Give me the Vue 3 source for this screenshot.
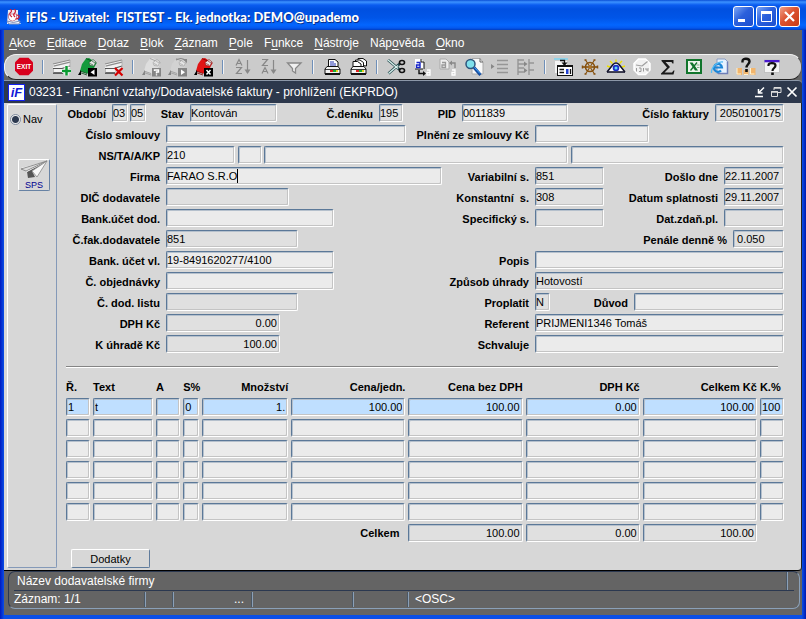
<script setup>
const menu = [
  ['', 'A', 'kce'], ['', 'E', 'ditace'], ['', 'D', 'otaz'], ['', 'B', 'lok'], ['', 'Z', 'áznam'],
  ['', 'P', 'ole'], ['F', 'u', 'nkce'], ['', 'N', 'ástroje'], ['Náp', 'o', 'věda'], ['', 'O', 'kno']
]

const card = (fill, dark, box, mark) => `
  <path d="M8 1.500 L11 1 L18.500 6 L15 13 L11 17 L2 14 L4 7Z" fill="${fill}"/>
  <path d="M8 1.500 L18.500 6 M2 14 L9 16.500 M2 15.500 L9 18" fill="none" stroke="${dark}" stroke-width=".8"/>
  <path d="M11 5.500 L15 2.500 L18 5 L16 9 L12 8.500Z" fill="#e4e4e4" stroke="${dark}" stroke-width=".6"/>
  <path d="M12 6.500 L15 8 M14 4 L17 6" stroke="${dark}" stroke-width=".6"/>
  <path d="M0 18 l3-5 v5z" fill="${box}"/>
  <rect x="10" y="11" width="9" height="8.500" fill="${box}"/>${mark}`

const sheet = `
  <path d="M1 7 L18 3 V11 L11 13 V16 H1Z" fill="#f2f2f2"/>
  <path d="M1 7 L18 3 M1.500 9.200 L18 5.200" stroke="#8c8c8c" stroke-width="1.200" fill="none"/>
  <path d="M1 11.500 H10 L18 9" stroke="#555" stroke-width="1.200" fill="none"/>
  <path d="M1 16 H11" stroke="#333" stroke-width="1.400"/>
  <path d="M1.500 12 V15.500 M18 3 V10" stroke="#aaa" stroke-width=".8"/>`

const letters = (a, b) => `
  <g fill="none" stroke="#888" stroke-width="1.200">${a}${b}
  <path d="M15.500 3 V16"/></g><path d="M12.500 12.500 h6 l-3 4.500z" fill="#888"/>`
const glyphA = y => `<path d="M4 ${y + 6} L7 ${y} L10 ${y + 6} M5 ${y + 4} H9"/>`
const glyphZ = y => `<path d="M4 ${y} H9.500 L4.500 ${y + 6} H10"/>`

const printer = `
  <path d="M3 12 L5 9.500 H16 L18 12 V17 H3Z" fill="#f2f2f2" stroke="#111"/>
  <path d="M3 12.500 H18" stroke="#111" stroke-width=".8"/>
  <rect x="3" y="16" width="15" height="2" fill="#111"/>
  <rect x="8" y="13" width="3" height="2" fill="#e02020"/><rect x="11" y="13" width="3" height="2" fill="#18b030"/><rect x="14" y="13" width="2" height="2" fill="#e8d020"/>`

const icons = {
  exit: `<path d="M5.500 .8 H14.500 L19 5.300 V13.700 L14.500 18.200 H5.500 L1 13.700 V5.300Z" fill="#d8001c"/><text x="10" y="12" text-anchor="middle" font-size="6.500" font-weight="bold" fill="#fff" font-family="Liberation Sans, sans-serif">EXIT</text>`,
  add: sheet + `<path d="M14.500 9 V18.500 M10 14 H19" stroke="#fff" stroke-width="4"/><path d="M14.500 9 V18.500 M10 14 H19" stroke="#0a9a30" stroke-width="2.500"/>`,
  load: card('#149a3c', '#064a18', '#000', '<path d="M16.500 12.500 v5.500 l-4-2.800z" fill="#fff"/>'),
  remove: sheet + `<path d="M11 11 L18.500 18.500 M18.500 11 L11 18.500" stroke="#d40000" stroke-width="2.200"/>`,
  query: card('#dedede', '#989898', '#858585', '<path d="M12.500 14 v-1 h4 v2 h-2 v1.500 M14.500 17.200 v1.300" fill="none" stroke="#fff" stroke-width="1.400"/>'),
  run: card('#d2d2d2', '#989898', '#858585', '<path d="M13 12.500 v5.500 l4-2.800z" fill="#fff"/>') + '<path d="M8 3 q5-3 9 0" fill="none" stroke="#888" stroke-width="1.200"/><path d="M14.500 2 h4.500 v4z" fill="#888"/>',
  cancel: card('#e01414', '#7c0000', '#000', '<path d="M12.500 13 l4 4.500 M16.500 13 l-4 4.500" stroke="#fff" stroke-width="1.500"/>'),
  az: letters(glyphA(2.5), glyphZ(10.5)),
  za: letters(glyphZ(2.5), glyphA(10.5)),
  filter: `<path d="M3.500 6 H17 L11.500 11.500 V16 L8.500 14 V11.500Z" fill="#f0f0f0" stroke="#888" stroke-width="1.300"/>`,
  print: `<path d="M6.500 10 V2.500 H13 L16 5 V10Z" fill="#fff" stroke="#111"/><path d="M8 5 h4 M8 7 h6 M8 9 h6" stroke="#2435b5"/>` + printer,
  printAll: `<path d="M10 8 V1.500 H15 L18.500 4 V9Z" fill="#fff" stroke="#111"/><path d="M7.500 9 V3 H12 L15.500 5.500 V10Z" fill="#fff" stroke="#111"/><path d="M5 10 V4.500 H9.500 L13 7 V10Z" fill="#fff" stroke="#111"/>` + printer,
  cut: `<path d="M2 3 L14 13 M2.500 16.500 L14 6.500" stroke="#284c50" stroke-width="2.800"/><path d="M2 3 L12 11.500 M2.500 16.500 L12 8.500" stroke="#d7f2ee" stroke-width="1.200"/><ellipse cx="16" cy="5.500" rx="2.500" ry="2" fill="none" stroke="#111" stroke-width="1.600"/><ellipse cx="16" cy="13.500" rx="2.500" ry="2" fill="none" stroke="#111" stroke-width="1.600"/>`,
  copy: `<path d="M3 2 H9 L12 5 V12 H3Z" fill="#fff"/><path d="M9 2 V5 H12 V12 M3 12 H11" fill="none" stroke="#111"/><path d="M4.500 5.500 H8 V10.500 H4.500 V8 H8" fill="none" stroke="#1724c8" stroke-width="1.400"/><path d="M7 13 V16.500 H12" fill="none" stroke="#111" stroke-width="1.400"/><path d="M11 14 l3 2.500 l-3 2.500z" fill="#111"/><path d="M15 13 H18 V18 H15 V15.500 H18" fill="none" stroke="#fff" stroke-width="1.300"/>`,
  paste: `<path d="M2 2 H8 L11 5 V12 H2Z" fill="#eee" stroke="#aaa"/><path d="M4 5.500 H7.500 V10.500 H4 V8 H7.500" fill="none" stroke="#999" stroke-width="1.300"/><path d="M12 6 H17 V11" fill="none" stroke="#888" stroke-width="1.400"/><path d="M14 3.500 l-3 2.500 l3 2.500z" fill="#888"/><path d="M14 13 H17 V18 H14 V15.500 H17" fill="none" stroke="#fff" stroke-width="1.300"/>`,
  find: `<path d="M8 1.500 H16 L19 5 V17 H8Z" fill="#f8f8f8" stroke="#aaa"/><path d="M16 1.500 V5 H19" fill="none" stroke="#666"/><circle cx="6.500" cy="7" r="4.500" fill="#7fe0ec" stroke="#2d557c" stroke-width="1.500"/><path d="M10 10.500 L16.500 18" stroke="#164c9e" stroke-width="3"/><path d="M10.500 10.500 L16 16.500" stroke="#3fa6ff" stroke-width="1"/>`,
  indent: `<path d="M7 3.500 H18 M7 7.500 H18 M7 11.500 H18 M7 15.500 H18" stroke="#969696" stroke-width="1.600"/><path d="M1 7 v5 l3.500-2.500z" fill="#888"/>`,
  tree: `<path d="M2 2 V18 M2 3 H8 M2 7 H8 M2 11 H8 M2 15 H8 M13 2 V18 M13 6 H18 M13 13 H18" fill="none" stroke="#969696" stroke-width="1.400"/><path d="M8 4.500 v5 l3.500-2.500z M8 11 v5 l3.500-2.500z" fill="#888"/>`,
  list: `<path d="M0 2 H14" stroke="#7ad4f2" stroke-width="1.500"/><path d="M1 4 H13 V16 H1Z" fill="#f4f4f4"/><rect x="3.500" y="8.500" width="15" height="10" fill="#fff" stroke="#111"/><path d="M3 9 H19" stroke="#111" stroke-width="2"/><path d="M5.500 12.500 h4.500 M5.500 15.500 h4.500 M16.500 12 v5" stroke="#111" stroke-width="1.300"/><rect x="12" y="12" width="2.500" height="5" fill="#2040d0"/><path d="M6 3.500 H10.500 V6" fill="none" stroke="#111" stroke-width="1.300"/><path d="M7.500 5.500 h6 l-3 3.500z" fill="#111"/>`,
  helm: `<g stroke="#86500c" fill="none"><circle cx="10" cy="10" r="4.500" stroke-width="1.600"/><path d="M2 10 H18" stroke-width="1.600"/><path d="M5.500 3 L14.500 17 M14.500 3 L5.500 17" stroke-width="1.100"/><path d="M2.500 8.500 V11.500 M17.500 8.500 V11.500 M4.500 3 H6.500 M13.500 3 H15.500 M4.500 17 H6.500 M13.500 17 H15.500" stroke-width="1.500"/></g><circle cx="10" cy="10" r="1.600" fill="#b0731e"/>`,
  eye: `<path d="M10 2.500 V5 M4 4 L6.500 6.500 M16 4 L13.500 6.500 M1 9 L4 10 M19 9 L16 10" stroke="#ede000" stroke-width="1.400"/><path d="M10 5.500 L18 15 H2Z" fill="#fff"/><path d="M1 15 L7 7.500 Q10 4.500 13 7.500 L19 15" fill="none" stroke="#14142c" stroke-width="1.500"/><path d="M1 15 H19" stroke="#14142c" stroke-width="1.600"/><circle cx="10" cy="11" r="3.300" fill="#1c30c8"/><circle cx="10" cy="11" r="1.500" fill="#62d7f6"/>`,
  clock: `<path d="M6.500 2 H13.500 L18 6.500 V13 L13.500 17.500 H6.500 L2 13 V6.500Z" fill="#f2f2f2" stroke="#fff" stroke-width="1.500"/><path d="M10 9 L15.500 4.500 M4 8 L10 9" stroke="#a0a0a0" stroke-width="1.200"/><path d="M4.500 11 v3.500 M7 11 h2 v3.500 h-2 M11.500 11 v3.500 M14 11 v2 h2 M16 11 v3.500" fill="none" stroke="#999"/>`,
  sum: `<path d="M3.500 3 H15.500 V6.500 H14.500 L13.500 5 H7.500 L12 10 L6.500 15.500 H14 L15.500 13.500 H16.500 L15.500 17.500 H3 V16.500 L9 10.500 L3.500 4Z" fill="#1a1a1a"/>`,
  excel: `<rect x="3" y="3" width="14" height="13" fill="#eef5ec" stroke="#11752c" stroke-width="2"/><path d="M5.500 5.500 H8.500 L14 13.500 H11Z" fill="#11752c"/><path d="M13 5.500 L6.500 13.500" stroke="#11752c" stroke-width="1.300"/><path d="M12.500 8 h3 M13 10.500 h2.500" stroke="#6a9d72" stroke-width=".8"/>`,
  web: `<path d="M7 2 H15 L17.500 4.500 V16.500 H7Z" fill="#e6f2ff" stroke="#8a9dc2"/><path d="M17.500 4.500 V16.500 H8" fill="none" stroke="#6f7fb8" stroke-width="1.500"/><path d="M4 10.500 H12 A4 4 0 1 0 11 13.500" fill="none" stroke="#1b86d8" stroke-width="2.200"/><path d="M1.500 16 C1 10 8 4 13 5" fill="none" stroke="#55bcf5" stroke-width="1.300"/>`,
  who: `<path d="M1 11 h5 v7 h-5z M7.500 13 h5 v5 h-5z M14.500 11 h5 v7 h-5z" fill="#f2b56c"/><path d="M1 11 v6 h4 M14.500 11 v6 h4 M8 17.500 h4" fill="none" stroke="#fff2d0"/><path d="M6.500 5.500 V4 C6.500 1 13.500 1 13.500 4.500 C13.500 7 10.500 7.500 10.500 10.500" fill="none" stroke="#111" stroke-width="2.400"/><rect x="9.200" y="12" width="2.600" height="3" fill="#111"/>`,
  help: `<rect x="2.500" y="3" width="15" height="12.500" fill="#f4f4f4" stroke="#bbb" stroke-width=".8"/><rect x="2.500" y="3" width="15" height="2.300" fill="#4818cc"/><path d="M6.500 9 V8 C6.500 5.500 13.500 5.500 13.500 8.500 C13.500 11 10.500 11 10.500 14" fill="none" stroke="#111" stroke-width="2.200"/><rect x="9.200" y="15.500" width="2.600" height="2.500" fill="#111"/>`
}

const tools = [
  [['exit', 'Konec']],
  [['add', 'Vložit'], ['load', 'Načíst'], ['remove', 'Smazat']],
  [['query', 'Zadat dotaz'], ['run', 'Spustit dotaz'], ['cancel', 'Zrušit dotaz']],
  [['az', 'Vzestupně'], ['za', 'Sestupně'], ['filter', 'Filtr']],
  [['print', 'Tisk'], ['printAll', 'Tisk všeho']],
  [['cut', 'Vyjmout'], ['copy', 'Kopírovat'], ['paste', 'Vložit hodnotu'], ['find', 'Hledat'], ['indent', 'Odsadit'], ['tree', 'Strom']],
  [['list', 'Seznam'], ['helm', 'Navigace'], ['eye', 'Náhled'], ['clock', 'Kalendář'], ['sum', 'Součet'], ['excel', 'Excel'], ['web', 'Web'], ['who', 'Kontakty'], ['help', 'Nápověda']]
]

// Cell builders: proportional widths of one form row add up to 720.
const L = (label, w) => ({ label, w })
const F = (name, value, w, opt = {}) => ({ name, value, w, ...opt })
const G = w => ({ w })
const dim = { dim: true }
const num = { dim: true, right: true }

const rows = [
  [L('Období', 48), F('Období', '03', 16, dim), G(2), F('Období rok', '05', 16, dim), L('Stav', 44), F('Stav', 'Kontován', 87, dim), L('Č.deníku', 102), F('Č.deníku', '195', 24, dim), L('PID', 59), F('PID', '0011839', 106), L('Číslo faktury', 147), F('Číslo faktury', '2050100175', 69, num)],
  [L('Číslo smlouvy', 102), F('Číslo smlouvy', '', 240), L('Plnění ze smlouvy Kč', 129), F('Plnění ze smlouvy Kč', '', 114), G(135)],
  [L('NS/TA/A/KP', 102), F('NS/TA/A/KP', '210', 69), G(3), F('TA', '', 24), G(2), F('A', '', 304), G(3), F('KP', '', 213)],
  [L('Firma', 102), F('Firma', 'FARAO S.R.O', 276, { caret: true }), L('Variabilní s.', 93), F('Variabilní s.', '851', 69, dim), L('Došlo dne', 120), F('Došlo dne', '22.11.2007', 60, dim)],
  [L('DIČ dodavatele', 102), F('DIČ dodavatele', '', 123, dim), L('Konstantní  s.', 246), F('Konstantní  s.', '308', 69, dim), L('Datum splatnosti', 120), F('Datum splatnosti', '29.11.2007', 60, dim)],
  [L('Bank.účet dod.', 102), F('Bank.účet dod.', '', 168), L('Specifický s.', 201), F('Specifický s.', '', 69, dim), L('Dat.zdaň.pl.', 120), F('Dat.zdaň.pl.', '', 60, dim)],
  [L('Č.fak.dodavatele', 102), F('Č.fak.dodavatele', '851', 132, dim), L('Penále denně %', 435), F('Penále denně %', ' 0.050', 51, dim)],
  [L('Bank. účet vl.', 102), F('Bank. účet vl.', '19-8491620277/4100', 168), L('Popis', 201), F('Popis', '', 249)],
  [L('Č. objednávky', 102), F('Č. objednávky', '', 168), L('Způsob úhrady', 201), F('Způsob úhrady', 'Hotovostí', 249, dim)],
  [L('Č. dod. listu', 102), F('Č. dod. listu', '', 132, dim), L('Proplatit', 237), F('Proplatit', 'N', 15, dim), L('Důvod', 84), F('Důvod', '', 150)],
  [L('DPH Kč', 102), F('DPH Kč', '0.00', 114, num), L('Referent', 255), F('Referent', 'PRIJMENI1346 Tomáš', 249)],
  [L('K úhradě Kč', 102), F('K úhradě Kč', '100.00', 114, num), L('Schvaluje', 255), F('Schvaluje', '', 249)]
]
const fieldId = name => 'f-' + name.replace(/[^\p{L}\p{N}]+/gu, '-')

const columns = [
  { title: 'Ř.', w: 24 }, { title: 'Text', w: 60 }, { title: 'A', w: 24 }, { title: 'S%', w: 16 },
  { title: 'Množství', w: 86, right: true }, { title: 'Cena/jedn.', w: 114, right: true },
  { title: 'Cena bez DPH', w: 114, right: true }, { title: 'DPH Kč', w: 114, right: true },
  { title: 'Celkem Kč', w: 114, right: true }, { title: 'K.%', w: 24 }
]
const columnTotal = columns.reduce((s, c) => s + c.w, 0)
const lines = [
  ['1', 't', '', '0', '1.', '100.00', '100.00', '0.00', '100.00', '100'],
  ...Array.from({ length: 5 }, () => Array(10).fill(''))
]
const totals = [['Celkem bez DPH', '100.00'], ['Celkem DPH', '0.00'], ['Celkem Kč', '100.00']]
</script>

<template>
  <div class="window">
    <header class="titlebar">
      <svg class="java" viewBox="0 0 16 16" aria-hidden="true">
        <path d="M2 1 H12 V11 L15 15 H1Z" fill="#e9eef8" />
        <path d="M2.500 5 h8 v4 q-1 3 -4 3 q-3 0 -4-3z" fill="#fff" stroke="#c98a9a" />
        <path d="M4 0 q3 2 0 4 q-1 2 2 4 M8 0 q3 2 0 5 q-1 1 1 3 M10.500 6 q4 0 2 3 q-1 1 -3 1" fill="none" stroke="#cf2036" stroke-width="1.200" />
        <path d="M1 12 q6 3 13 0 l-1 3 h-10z" fill="#f5f8ff" stroke="#8190bb" />
      </svg>
      <h1>iFIS - Uživatel:&nbsp; FISTEST - Ek. jednotka: DEMO@upademo</h1>
      <button class="xp" type="button" aria-label="Minimalizovat"><svg viewBox="0 0 19 19"><path d="M4 13.500 H11" stroke="#fff" stroke-width="3" /></svg></button>
      <button class="xp" type="button" aria-label="Maximalizovat"><svg viewBox="0 0 19 19"><path d="M4.500 5 V14.500 H14.500 V5" fill="none" stroke="#fff" /><path d="M4 5.500 H15" stroke="#fff" stroke-width="3" /></svg></button>
      <button class="xp close" type="button" aria-label="Zavřít"><svg viewBox="0 0 19 19"><path d="M5 5 L14 14 M14 5 L5 14" stroke="#fff" stroke-width="2.200" /></svg></button>
    </header>

    <div class="frame">
      <nav class="menu">
        <a v-for="m in menu" :key="m.join('')" href="#">{{ m[0] }}<u>{{ m[1] }}</u>{{ m[2] }}</a>
      </nav>

      <div class="toolbar" role="toolbar">
        <div v-for="(group, i) in tools" :key="i" class="group">
          <button v-for="t in group" :key="t[0]" type="button" class="tool" :aria-label="t[1]">
            <svg viewBox="0 0 20 20" v-html="icons[t[0]]"></svg>
          </button>
        </div>
      </div>

      <div class="subtitle">
        <span class="logo">iF</span>
        <h2>03231 - Finanční vztahy/Dodavatelské faktury - prohlížení (EKPRDO)</h2>
        <button type="button" aria-label="Sbalit"><svg viewBox="0 0 12 12"><path d="M1 10.500 H9 M10 1.500 L5 6.500 M4.500 3 V7 H8.500" fill="none" stroke="#fff" stroke-width="1.500" /></svg></button>
        <button type="button" aria-label="Obnovit"><svg viewBox="0 0 12 12"><path d="M4 4 V1.500 H11 V6.500 H8" fill="none" stroke="#ddd" /><path d="M4 2 H11 M1 6 H8" stroke="#ddd" stroke-width="1.500" /><path d="M1.500 5.500 H7.500 V10.500 H1.500Z" fill="none" stroke="#ddd" /></svg></button>
        <button type="button" aria-label="Zavřít formulář"><svg viewBox="0 0 12 12"><path d="M1.500 1.500 L10.500 10.500 M10.500 1.500 L1.500 10.500" stroke="#fff" stroke-width="1.700" /></svg></button>
      </div>

      <div class="body">
        <aside class="side">
          <label class="nav"><input type="radio" name="nav" checked>Nav</label>
          <button type="button" class="sps">
            <svg viewBox="0 0 28 20" aria-hidden="true">
              <path d="M1 8 L27 1 L18 14 L13 12 L9 18 L6 10Z" fill="#fff" />
              <path d="M1 9 L27 1 L6 11Z" fill="#ddd" stroke="#777" stroke-width=".8" />
              <path d="M7 12 L26 2 L12 11 L15 17 L8 18Z" fill="#555" />
              <path d="M12 11 L27 1 L17 17Z" fill="#f8f8f8" stroke="#888" stroke-width=".8" />
            </svg>
            <span>SPS</span>
          </button>
        </aside>

        <main class="content">
          <form class="form" @submit.prevent>
            <div v-for="(row, r) in rows" :key="r" class="row">
              <div v-for="(c, i) in row" :key="i" class="cell" :style="{ flexGrow: c.w }">
                <label v-if="c.label" :for="fieldId(c.label)">{{ c.label }}</label>
                <input
                  v-else-if="c.name" :id="fieldId(c.name)" type="text" class="field"
                  :class="{ dim: c.dim, right: c.right }" :aria-label="c.name" :value="c.value"
                >
                <span v-if="c.caret" class="caret" aria-hidden="true">{{ c.value }}</span>
              </div>
            </div>
          </form>

          <hr>

          <table class="lines">
            <colgroup>
              <col v-for="c in columns" :key="c.title" :style="{ width: (c.w / columnTotal * 100) + '%' }">
            </colgroup>
            <thead>
              <tr><th v-for="c in columns" :key="c.title" scope="col" :class="{ right: c.right }">{{ c.title }}</th></tr>
            </thead>
            <tbody>
              <tr v-for="(line, r) in lines" :key="r" :class="{ current: r === 0 }">
                <td v-for="(v, i) in line" :key="i">
                  <input type="text" class="field" :class="{ right: columns[i].right }" :value="v" :aria-label="columns[i].title + ' ' + (r + 1)">
                </td>
              </tr>
            </tbody>
            <tfoot>
              <tr>
                <th colspan="6" scope="row" class="total">Celkem</th>
                <td v-for="t in totals" :key="t[0]"><input type="text" class="field dim right" :value="t[1]" :aria-label="t[0]"></td>
                <td></td>
              </tr>
            </tfoot>
          </table>

          <button type="button" class="extra">Dodatky</button>
        </main>
      </div>

      <footer class="status">
        <div class="hint"><span>Název dodavatelské firmy</span></div>
        <div class="info">
          <span class="record">Záznam: 1/1</span>
          <span class="short"></span>
          <span class="dots">...</span>
          <span class="mid"></span>
          <span class="half"></span>
          <span class="last">&lt;OSC&gt;</span>
        </div>
      </footer>
    </div>
  </div>
</template>

<style>
body {
  margin: 0;
  background: #0831d9;
}
</style>

<style scoped>
* {
  box-sizing: border-box;
}

.window {
  display: flex;
  flex-direction: column;
  min-height: 100vh;
  padding: 0 4px 4px;
  background: linear-gradient(90deg, #0019c0, #0a4ee6 4px, #0a4ee6 calc(100% - 4px), #0019b0);
  font-family: "Liberation Sans", Arial, sans-serif;
  font-size: 11px;
  color: #000;
}

button {
  padding: 0;
  border: 0;
  background: none;
  font: inherit;
  color: inherit;
}

svg {
  display: block;
}

.titlebar {
  display: flex;
  align-items: center;
  gap: 2px;
  height: 30px;
  margin: 0 -4px;
  padding: 3px 6px 0;
  background: linear-gradient(#0a4fd6 0, #3c92ff 2px, #0a5cf0 5px, #0050e0 9px, #0055e8 18px, #0366ff 25px, #0458ee 28px, #003cc0 30px);
}

.java {
  width: 16px;
  height: 16px;
}

.titlebar h1 {
  flex: 1;
  margin: 0;
  padding-left: 2px;
  font-family: Lato, "Liberation Sans", sans-serif;
  font-size: 13px;
  font-weight: 900;
  line-height: 20px;
  white-space: pre;
  color: #fff;
  text-shadow: 1px 1px #06308c;
}

.xp {
  width: 21px;
  height: 21px;
  border: 1px solid #fff;
  border-radius: 3px;
  background: linear-gradient(135deg, #7da7f5, #2b60dc 45%, #1c4fcf);
}

.xp.close {
  background: linear-gradient(135deg, #f0a088, #dc5230 45%, #c83a14);
}

.frame {
  flex: 1;
  display: flex;
  flex-direction: column;
  background: #646464;
}

.menu {
  display: flex;
  gap: 11px;
  height: 24px;
  padding: 0 5px;
  line-height: 26px;
  font-size: 12px;
}

.menu a {
  color: #fff;
  text-decoration: none;
}

.menu u {
  text-underline-offset: 2px;
}

.toolbar {
  display: flex;
  height: 26px;
  padding: 0 6px;
  border: 1px solid #f4f4f4;
  border-bottom-color: #222;
  border-right-color: #555;
  border-radius: 12px;
  background: #cbcbcb;
}

.group {
  display: flex;
  align-items: center;
}

.group + .group::before {
  content: "";
  box-sizing: border-box;
  width: 2px;
  height: 14px;
  margin: 0 5px;
  border-left: 1px solid #6f8fb8;
  border-right: 1px solid #f2f2f2;
}

.tool {
  width: 26px;
  padding: 0 3px;
}

.tool svg {
  width: 20px;
  height: 20px;
}

.subtitle {
  display: flex;
  align-items: center;
  gap: 4px;
  height: 23px;
  padding: 0 4px;
  background: #2d384c;
  border-top: 1px solid #8c97a8;
  border-top-right-radius: 4px;
  color: #fff;
}

.logo {
  width: 17px;
  height: 17px;
  border: 1px solid #1420f0;
  background: #fff;
  color: #1018d8;
  font-size: 13px;
  font-weight: bold;
  font-style: italic;
  line-height: 15px;
  text-align: center;
}

.subtitle h2 {
  flex: 1;
  margin: 0;
  padding-left: -2px;
  font-size: 12px;
  font-weight: normal;
  white-space: nowrap;
}

.subtitle svg {
  width: 12px;
  height: 12px;
}

.body {
  flex: 1;
  display: flex;
  padding-right: 17px;
  border-bottom: 1px solid #000;
  border-right: 1px solid #222;
  border-bottom-right-radius: 4px;
  background: #d7d7d7;
}

.side {
  display: flex;
  flex-direction: column;
  align-items: flex-start;
  width: 50px;
  margin: 1px 7px 2px 3px;
  border: 1px solid #fff;
  border-right-color: #8499b8;
  border-bottom-color: #8499b8;
  border-radius: 2px;
}

.nav {
  display: flex;
  align-items: center;
  gap: 2px;
  margin: 7px 0 0 2px;
  line-height: 14px;
}

.nav input {
  appearance: none;
  width: 11px;
  height: 11px;
  margin: 0;
  border: 1px solid #7f8ca0;
  border-radius: 50%;
  background: radial-gradient(circle, #2c3950 3px, #eee 4px);
}

.sps {
  width: 32px;
  height: 32px;
  margin: 33px 0 0 10px;
  border: 1px solid #fff;
  border-right-color: #6782a4;
  border-bottom-color: #6782a4;
  border-radius: 2px;
}

.sps svg {
  width: 28px;
  height: 20px;
  margin: 0 1px;
}

.sps span {
  display: block;
  font-size: 9px;
  line-height: 10px;
  color: #000090;
}

.content {
  flex: 1;
  min-width: 0;
  padding: 1px 0 2px;
}

.form {
  display: grid;
  gap: 3px;
}

.row {
  display: flex;
  height: 18px;
}

.cell {
  position: relative;
  flex: 1 1 0;
  min-width: 0;
}

.cell label {
  display: block;
  padding: 2px 6px 0 0;
  line-height: 17px;
  font-weight: bold;
  text-align: right;
  white-space: pre;
}

.field {
  display: block;
  width: 100%;
  height: 18px;
  margin: 0;
  padding: 0 1px;
  border: 1px solid #fff;
  border-top-color: #5b7898;
  border-left-color: #5b7898;
  border-radius: 2px;
  outline: 0;
  background: #ebebeb;
  box-shadow: inset -1px -1px #c4c4c4, inset 1px 1px #b5c0cc;
  font: inherit;
  color: #000;
}

.cell .field {
  padding-left: 0;
}

.dim {
  background: #e0e0e0;
}

.right {
  text-align: right;
}

input.right {
  padding-right: 2px;
}

.caret {
  position: absolute;
  top: 2px;
  left: 1px;
  height: 14px;
  border-right: 1px solid #000;
  color: transparent;
  pointer-events: none;
}

hr {
  height: 2px;
  margin: 13px 6px 0 2px;
  border: 0;
  border-top: 1px solid #848484;
  background: #fff;
}

.lines {
  width: calc(100% + 4px);
  margin: 7px -3px 0 -1px;
  table-layout: fixed;
  border-spacing: 3px;
}

.lines th,
.lines td {
  padding: 0;
}

.lines th {
  height: 17px;
  text-align: left;
  white-space: nowrap;
}

.lines th.right,
.lines th.total {
  text-align: right;
}

.lines th.total {
  padding-right: 6px;
}

.current .field {
  background: #bfdfff;
}

.extra {
  display: block;
  width: 79px;
  height: 19px;
  margin: 4px 0 0 7px;
  border: 1px solid #fff;
  border-right-color: #5f7b9c;
  border-bottom-color: #5f7b9c;
  border-radius: 2px;
}

.status {
  margin: 0 2px 6px 4px;
  border: 1px solid #2b3850;
  border-right-color: #8aa0b8;
  border-bottom-color: #8aa0b8;
  border-radius: 7px;
  color: #fff;
  font-size: 12px;
}

.hint {
  display: flex;
  height: 19px;
  margin: 0 5px;
  padding: 0 6px 0 3px;
  border-bottom: 1px solid #2b3850;
  line-height: 19px;
}

.hint span {
  flex: 1;
  border-right: 2px groove #8aa0b8;
}

.info {
  display: flex;
  height: 17px;
  padding: 1px 5px;
  line-height: 15px;
}

.info span {
  flex: 0 0 auto;
  border-right: 2px groove #8aa0b8;
}

.info .record {
  width: 132px;
}

.info .short {
  width: 28px;
}

.info .dots {
  width: 79px;
  padding-right: 7px;
  text-align: right;
}

.info .mid {
  width: 101px;
}

.info .half {
  width: 55px;
}

.info .last {
  flex: 1;
  padding-left: 6px;
  border: 0;
}
</style>
